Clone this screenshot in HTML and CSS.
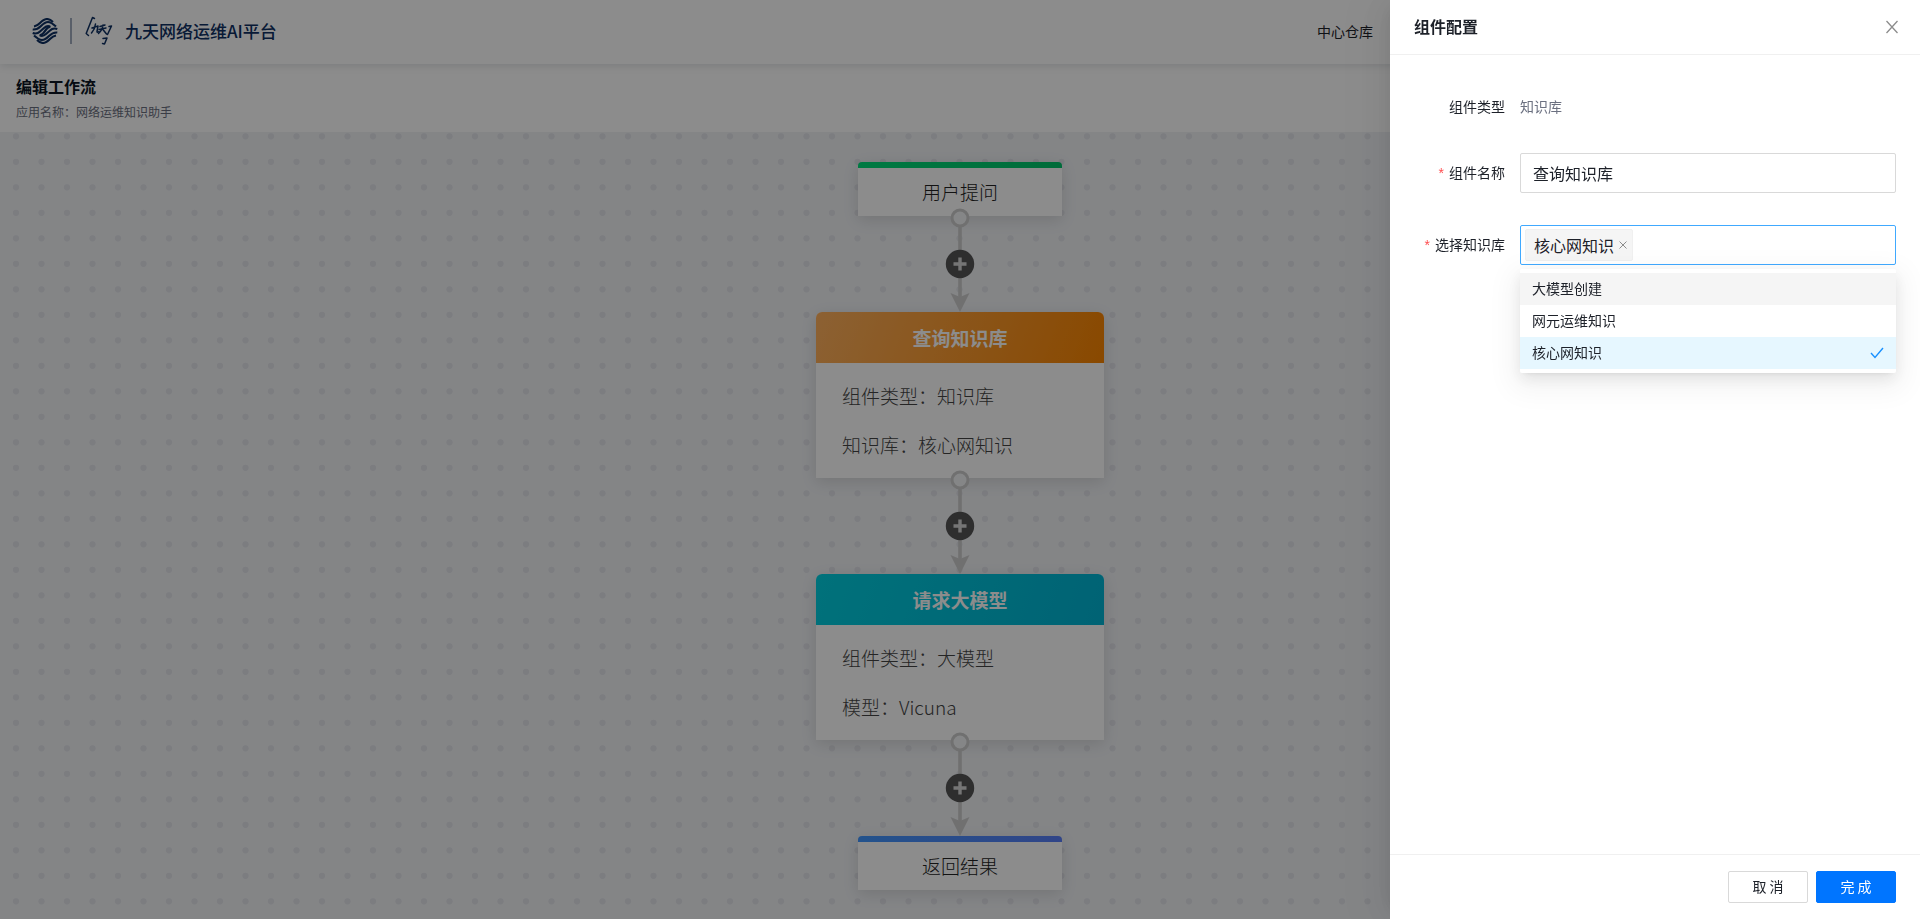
FILE: index.html
```html
<!DOCTYPE html>
<html lang="zh-CN">
<head>
<meta charset="utf-8">
<title>九天网络运维AI平台</title>
<link rel="stylesheet" href="styles.css">
</head>
<body>
<div class="page">
  <header class="topbar">
    <svg class="brand-mark" viewBox="0 0 26 26" aria-hidden="true">
      <g fill="none" stroke="currentColor" stroke-width="2.100">
        <g id="strands">
          <path d="M2 8.500 Q5 8 8 5 Q12 1 15 1 Q18 1 21 4"/>
          <path d="M0.700 11.500 Q5 12 9 8 Q13 4 16 4 Q19 4 24 8.500"/>
          <path d="M0.700 15 Q5 16.500 8 13.500 L12 10 Q15 7.300 18 8.500"/>
        </g>
        <use href="#strands" transform="rotate(180 13 13)"/>
        <path d="M7.500 17 Q9.500 17.500 11.500 15 L14.500 11 Q16.500 8.500 18.500 9"/>
      </g>
    </svg>
    <span class="brand-line"></span>
    <svg class="brand-script" viewBox="0 0 28 30" aria-hidden="true">
      <g fill="none" stroke="currentColor" stroke-width="1.500" stroke-linecap="round" stroke-linejoin="round">
        <path d="M9.500 2.500 L7.500 1.500 L1.200 17.500 L3.500 19.500"/>
        <path d="M7 12 L13 10 L12 15.500 Q12 17 14 15.500 M10.500 8 Q10 13 6.500 17"/>
        <path d="M15 10.500 L20 9 M14 13.500 L21 12 M18 9 Q17.500 14 13.500 17.500 M17.500 13 L21.500 18"/>
        <path d="M24 10.500 L26.500 10 L22.500 18.500 M18 22.500 L22 22 L19.500 28 L17.500 27.500"/>
      </g>
    </svg>
    <span class="brand-name">九天网络运维AI平台</span>
    <nav class="topnav"><a href="#">中心仓库</a></nav>
  </header>

  <section class="subhead">
    <h1>编辑工作流</h1>
    <p>应用名称：网络运维知识助手</p>
  </section>

  <main class="canvas">
    <svg class="dots" aria-hidden="true">
      <defs>
        <pattern id="grid" width="51" height="51" patternUnits="userSpaceOnUse">
          <g fill="#e2e3e9">
            <circle cx="16" cy="4.300" r="3.100"/><circle cx="41.500" cy="4.300" r="3.100"/>
            <circle cx="16" cy="29.800" r="3.100"/><circle cx="41.500" cy="29.800" r="3.100"/>
          </g>
        </pattern>
      </defs>
      <rect width="100%" height="100%" fill="url(#grid)"/>
    </svg>
    <div class="flow">
      <div class="terminal start">用户提问</div>
      <svg class="link" viewBox="0 0 30 106"><use href="#link-shape"/></svg>
      <article class="node knowledge">
        <h2>查询知识库</h2>
        <div class="node-body"><p>组件类型：知识库</p><p>知识库：核心网知识</p></div>
      </article>
      <svg class="link" viewBox="0 0 30 106"><use href="#link-shape"/></svg>
      <article class="node model">
        <h2>请求大模型</h2>
        <div class="node-body"><p>组件类型：大模型</p><p>模型：Vicuna</p></div>
      </article>
      <svg class="link" viewBox="0 0 30 106">
        <g id="link-shape">
          <path d="M15 20 V92" stroke="#ccc" stroke-width="3.600"/>
          <path d="M15 106 L5.500 87 L15 91 L24.500 87 Z" fill="#ccc"/>
          <circle cx="15" cy="12" r="8" fill="#f3f4f6" stroke="#ccc" stroke-width="3"/>
          <circle cx="15" cy="58" r="14.200" fill="#545454"/>
          <path d="M15 51.500 V64.500 M8.500 58 H21.500" stroke="#d6d6d6" stroke-width="3.400"/>
        </g>
      </svg>
      <div class="terminal end">返回结果</div>
    </div>
  </main>
</div>

<div class="mask"></div>

<aside class="drawer" role="dialog" aria-labelledby="drawer-title">
  <header class="drawer-head">
    <h2 id="drawer-title">组件配置</h2>
    <button class="close" type="button" aria-label="关闭">
      <svg viewBox="0 0 14 14"><path d="M1.500 1 L12.500 13 M12.500 1 L1.500 13"/></svg>
    </button>
  </header>
  <form class="drawer-body">
    <div class="row type-row"><span class="label">组件类型</span><span class="value">知识库</span></div>
    <div class="row">
      <label class="label required" for="name">组件名称</label>
      <input id="name" class="box" type="text" value="查询知识库">
    </div>
    <div class="row">
      <label class="label required" for="kb">选择知识库</label>
      <div class="picker">
        <div class="box select">
          <span class="tag">核心网知识<button type="button" aria-label="移除"><svg viewBox="0 0 8 8"><path d="M0.500 0.500 L7.500 7.500 M7.500 0.500 L0.500 7.500"/></svg></button></span>
          <input id="kb" type="text" role="combobox" aria-expanded="true" aria-controls="kb-list">
        </div>
        <ul class="menu" id="kb-list" role="listbox">
          <li class="active" role="option">大模型创建</li>
          <li role="option">网元运维知识</li>
          <li class="chosen" role="option" aria-selected="true">核心网知识<svg viewBox="0 0 14 12"><path d="M1 6 L5 10.500 L13 1"/></svg></li>
        </ul>
      </div>
    </div>
  </form>
  <footer class="drawer-foot">
    <button class="btn" type="button">取 消</button>
    <button class="btn primary" type="button">完 成</button>
  </footer>
</aside>
</body>
</html>
```
FILE: styles.css
```css
* { box-sizing: border-box; }

body {
  margin: 0;
  font: 14px/22px "Noto Sans CJK SC", sans-serif;
  color: #1d2129;
}

h1, h2, p, ul { margin: 0; padding: 0; }
button, input { font: inherit; color: inherit; }

.page {
  display: flex;
  flex-direction: column;
  height: 100vh;
  overflow: hidden;
}

.topbar {
  position: relative;
  z-index: 1;
  flex: none;
  display: flex;
  align-items: center;
  height: 64px;
  padding: 0 547px 2px 32px;
  background: #fff;
  box-shadow: 0 2px 8px rgba(0, 21, 41, .12);
  color: #0f3163;
}
.brand-mark { width: 26px; height: 26px; }
.brand-line { width: 2px; height: 26px; margin: 0 13px 0 12px; background: #a3adc0; }
.brand-script { width: 28px; height: 30px; }
.brand-name { margin-left: 12px; font-size: 17px; font-weight: 500; }
.topnav { margin-left: auto; }
.topnav a { color: #1d2129; text-decoration: none; }

.subhead { flex: none; height: 68px; padding: 10px 16px; background: #fff; }
.subhead h1 { font-size: 16px; line-height: 24px; font-weight: 700; color: #0b1524; }
.subhead p { padding-top: 4px; font-size: 12px; line-height: 20px; color: #6b7080; }

.canvas {
  position: relative;
  flex: 1;
  padding-top: 30px;
  background: #f0f2f5;
}
.dots { position: absolute; inset: 0; width: 100%; height: 100%; }

.flow {
  position: relative;
  display: flex;
  flex-direction: column;
  align-items: center;
  font-size: 19px;
  font-weight: 300;
}
.terminal {
  width: 204px;
  height: 54px;
  border-radius: 4px 4px 0 0;
  padding-top: 6px;
  line-height: 48px;
  text-align: center;
  color: #222;
  box-shadow: 0 4px 16px rgba(0, 0, 0, .12);
}
.start { background: linear-gradient(90deg, #00de7a, #00c46a) 0 0 / 100% 6px no-repeat, #fff; }
.end { background: linear-gradient(90deg, #4096ff, #597ef7) 0 0 / 100% 6px no-repeat, #fff; }

.link {
  position: relative;
  z-index: 1;
  width: 30px;
  height: 106px;
  margin-top: -10px;
}

.node {
  width: 288px;
  border-radius: 6px 6px 0 0;
  background: #fff;
  box-shadow: 0 4px 16px rgba(0, 0, 0, .12);
}
.node h2 {
  border-radius: 6px 6px 0 0;
  font-size: 19px;
  line-height: 51px;
  font-weight: 700;
  text-align: center;
  color: #fff;
}
.knowledge h2 { background: linear-gradient(110deg, #ffb15e, #fa8500); }
.model h2 { background: linear-gradient(110deg, #00cfe0, #00b4d4); }
.node-body { padding: 8px 26px 9px; line-height: 49px; color: #444; }

.mask { position: fixed; inset: 0; z-index: 5; background: rgba(0, 0, 0, .45); }

.drawer {
  position: fixed;
  inset: 0 0 0 auto;
  z-index: 6;
  display: flex;
  flex-direction: column;
  width: 530px;
  background: #fff;
  box-shadow: -6px 0 16px -8px rgba(0, 0, 0, .08), -9px 0 28px rgba(0, 0, 0, .05), -12px 0 48px 16px rgba(0, 0, 0, .03);
}
.drawer-head {
  display: flex;
  align-items: center;
  justify-content: space-between;
  height: 55px;
  padding: 0 21px 0 24px;
  border-bottom: 1px solid #f0f0f0;
}
.drawer-head h2 { font-size: 16px; line-height: 22px; font-weight: 700; padding-bottom: 2px; }
.close { display: flex; padding: 0; border: 0; background: none; }
.close svg { width: 14px; height: 14px; fill: none; stroke: #8c8c8c; stroke-width: 1.3; }

.drawer-body { flex: 1; padding: 32px 24px 0; }
.row { display: flex; gap: 15px; height: 40px; margin-bottom: 32px; line-height: 38px; }
.type-row { margin-bottom: 26px; }
.label { width: 91px; text-align: right; white-space: nowrap; }
.required::before { content: "*"; margin-right: 5px; color: #ff4d4f; font-family: "Liberation Sans", sans-serif; line-height: 1; }
.value { color: #6b7080; }
.box {
  flex: 1;
  min-width: 0;
  height: 40px;
  padding: 0 12px;
  border: 1px solid #d9d9d9;
  border-radius: 2px;
  background: #fff;
  font-size: 16px;
}
.picker { position: relative; flex: 1; }
.select { display: flex; align-items: center; padding: 0 4px; border-color: #40a9ff; }
.select input { flex: 1; min-width: 0; border: 0; outline: 0; background: none; }
.tag {
  display: flex;
  align-items: center;
  gap: 5px;
  height: 32px;
  padding: 0 5px 0 8px;
  border: 1px solid #f0f0f0;
  border-radius: 2px;
  background: #f5f5f5;
}
.tag button { display: flex; padding: 0; border: 0; background: none; }
.tag svg { width: 8px; height: 8px; fill: none; stroke: #8c8c8c; }

.menu {
  position: absolute;
  top: 44px;
  left: 0;
  right: 0;
  padding: 4px 0;
  border-radius: 2px;
  background: #fff;
  box-shadow: 0 3px 6px -4px rgba(0, 0, 0, .12), 0 6px 16px rgba(0, 0, 0, .08), 0 9px 28px 8px rgba(0, 0, 0, .05);
  list-style: none;
}
.menu li { display: flex; justify-content: space-between; height: 32px; padding: 0 12px; line-height: 30px; }
.menu .active { background: #f5f5f5; }
.menu .chosen { background: #e6f7ff; }
.menu svg { align-self: center; width: 14px; height: 12px; fill: none; stroke: #1890ff; stroke-width: 1.4; }

.drawer-foot {
  display: flex;
  justify-content: flex-end;
  gap: 8px;
  padding: 16px 24px;
  border-top: 1px solid #f0f0f0;
}
.btn {
  width: 80px;
  height: 32px;
  padding: 0 0 2px;
  border: 1px solid #d9d9d9;
  border-radius: 2px;
  background: #fff;
}
.primary { border-color: #0075ff; background: #0075ff; color: #fff; }
```
